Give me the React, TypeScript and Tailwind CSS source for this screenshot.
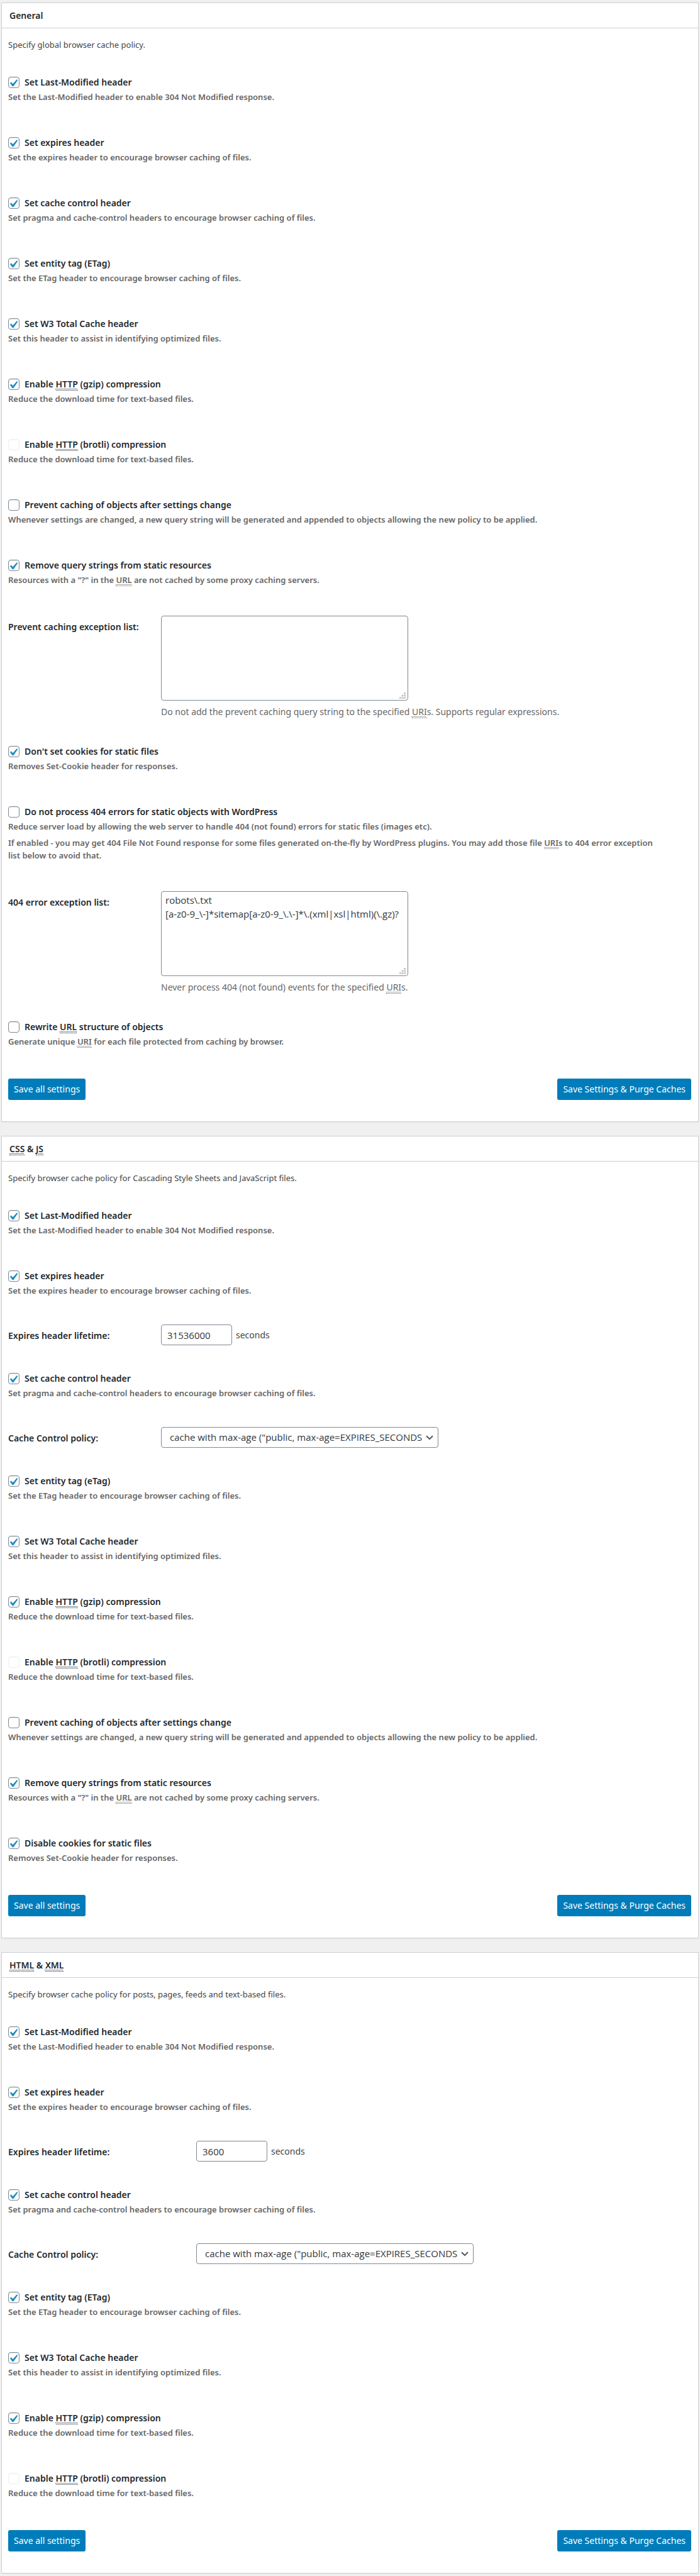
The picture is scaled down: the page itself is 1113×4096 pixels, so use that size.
import { useId, type ReactNode } from "react";

function Abbr({ children }: { children: string }) {
  return (
    <abbr className="border-b border-dotted border-current underline decoration-dotted decoration-1 underline-offset-2">
      {children}
    </abbr>
  );
}

type CheckProps = {
  label: ReactNode;
  note: ReactNode;
  more?: ReactNode;
  checked?: boolean;
  disabled?: boolean;
};

function CheckRow({ label, note, more, checked = false, disabled = false }: CheckProps) {
  const id = useId();
  return (
    <div className="pt-5 pb-[33px] font-semibold">
      <div className="flex h-5 items-center gap-2">
        <span className="relative block size-[18px] shrink-0">
          <input
            id={id}
            type="checkbox"
            defaultChecked={checked}
            disabled={disabled}
            className="peer block size-[18px] appearance-none rounded-[4px] border border-[#7e8993] bg-white shadow-[inset_0_1px_2px_rgba(0,0,0,0.1)] disabled:border-[#efefef] disabled:shadow-[inset_0_1px_2px_rgba(0,0,0,0.04)]"
          />
          <svg
            viewBox="3.4 1.4 15 15"
            className="pointer-events-none absolute inset-0 hidden size-[18px] peer-checked:block"
            aria-hidden="true"
          >
            <path
              d="M14.83 4.89l1.34.94-5.81 8.38H9.02L5.78 9.67l1.34-1.25 2.57 2.4z"
              fill="#1e8cbe"
            />
          </svg>
        </span>
        <label htmlFor={id} className="text-sm text-[#23282d]">
          {label}
        </label>
      </div>
      <p className="mt-[3px] text-[13px] leading-5 text-[#666]">{note}</p>
      {more && <p className="mt-1.5 text-[13px] leading-5 text-[#666]">{more}</p>}
    </div>
  );
}

function FieldLabel({ id, wide, children }: { id: string; wide?: boolean; children: string }) {
  return (
    <label
      htmlFor={id}
      className={
        (wide ? "w-[299px]" : "w-[243px]") +
        " mt-2 shrink-0 text-sm leading-5 font-semibold text-[#23282d]"
      }
    >
      {children}
    </label>
  );
}

function TextareaRow({ label, value, help }: { label: string; value: string; help: ReactNode }) {
  const id = useId();
  return (
    <div className="flex items-start pt-[14px] pb-[23px]">
      <FieldLabel id={id}>{label}</FieldLabel>
      <div>
        <div className="relative h-[135px] w-[393px]">
          <textarea
            id={id}
            defaultValue={value}
            className="block size-full resize-none rounded-[4px] border border-[#7e8993] bg-white px-1.5 py-0.5 font-['Open_Sans',sans-serif] text-[15px] leading-[22px] text-[#32373c]"
          />
          <svg
            viewBox="0 0 11 11"
            className="pointer-events-none absolute right-1 bottom-[3px] size-[10px]"
            fill="#c4c4c4"
            aria-hidden="true"
          >
            <rect x="8" y="0" width="3" height="3" />
            <rect x="4" y="4" width="3" height="3" />
            <rect x="8" y="4" width="3" height="3" />
            <rect x="0" y="8" width="3" height="3" />
            <rect x="4" y="8" width="3" height="3" />
            <rect x="8" y="8" width="3" height="3" />
          </svg>
        </div>
        <p className="mt-2 text-sm leading-5 text-[#666]">{help}</p>
      </div>
    </div>
  );
}

function LifetimeRow({ value, wide }: { value: string; wide?: boolean }) {
  const id = useId();
  return (
    <div className="flex items-start pt-[11px] pb-[23px]">
      <FieldLabel id={id} wide={wide}>
        Expires header lifetime:
      </FieldLabel>
      <div className="flex items-center gap-1.5">
        <input
          id={id}
          type="text"
          defaultValue={value}
          className="h-[33px] w-[113px] rounded-[4px] border border-[#7e8993] bg-white px-[9px] font-['Open_Sans',sans-serif] text-[15px] text-[#32373c]"
        />
        <span className="text-sm text-[#444]">seconds</span>
      </div>
    </div>
  );
}

function PolicyRow({ wide }: { wide?: boolean }) {
  const id = useId();
  return (
    <div className="flex items-start pt-[11px] pb-[23px]">
      <FieldLabel id={id} wide={wide}>
        Cache Control policy:
      </FieldLabel>
      <div className="relative">
        <select
          id={id}
          className="block h-[33px] w-[441px] appearance-none rounded-[4px] border border-[#7e8993] bg-white pr-5 pl-[13px] font-['Open_Sans',sans-serif] text-[15px] text-[#32373c]"
        >
          <option>cache with max-age ("public, max-age=EXPIRES_SECONDS</option>
        </select>
        <svg
          viewBox="0 0 12 8"
          className="pointer-events-none absolute top-[13px] right-2 h-2 w-3"
          fill="none"
          stroke="#555"
          strokeWidth="2"
          aria-hidden="true"
        >
          <path d="M1 1.2l5 5 5-5" />
        </svg>
      </div>
    </div>
  );
}

function Card({ title, intro, children }: { title: ReactNode; intro: string; children: ReactNode }) {
  const button =
    "h-[34px] rounded-[3px] bg-[#007cba] px-[9px] text-sm text-white";
  return (
    <section className="border border-[#ccd0d4] bg-white shadow-[0_1px_1px_rgba(0,0,0,0.04)]">
      <h2 className="flex h-10 items-center border-b border-[#ccd0d4] px-3 text-sm font-semibold text-[#23282d]">
        <span>{title}</span>
      </h2>
      <form className="pt-4 pr-[11px] pb-[34px] pl-[10px]" onSubmit={(e) => e.preventDefault()}>
        <p className="mb-5 text-[13px] leading-5 text-[#444]">{intro}</p>
        {children}
        <div className="flex justify-between pt-4">
          <button type="submit" className={button}>
            Save all settings
          </button>
          <button type="submit" className={button}>
            Save Settings &amp; Purge Caches
          </button>
        </div>
      </form>
    </section>
  );
}

const encourage = "header to encourage browser caching of files.";

function LastModified() {
  return (
    <CheckRow
      checked
      label="Set Last-Modified header"
      note="Set the Last-Modified header to enable 304 Not Modified response."
    />
  );
}

function Expires() {
  return <CheckRow checked label="Set expires header" note={`Set the expires ${encourage}`} />;
}

function CacheControl() {
  return (
    <CheckRow
      checked
      label="Set cache control header"
      note="Set pragma and cache-control headers to encourage browser caching of files."
    />
  );
}

function EntityTag({ name }: { name: string }) {
  return <CheckRow checked label={`Set entity tag (${name})`} note={`Set the ETag ${encourage}`} />;
}

function W3Header() {
  return (
    <CheckRow
      checked
      label="Set W3 Total Cache header"
      note="Set this header to assist in identifying optimized files."
    />
  );
}

function Compression() {
  const note = "Reduce the download time for text-based files.";
  return (
    <>
      <CheckRow
        checked
        label={
          <>
            Enable <Abbr>HTTP</Abbr> (gzip) compression
          </>
        }
        note={note}
      />
      <CheckRow
        disabled
        label={
          <>
            Enable <Abbr>HTTP</Abbr> (brotli) compression
          </>
        }
        note={note}
      />
    </>
  );
}

function QueryStrings() {
  return (
    <>
      <CheckRow
        label="Prevent caching of objects after settings change"
        note="Whenever settings are changed, a new query string will be generated and appended to objects allowing the new policy to be applied."
      />
      <CheckRow
        checked
        label="Remove query strings from static resources"
        note={
          <>
            Resources with a "?" in the <Abbr>URL</Abbr> are not cached by some proxy caching
            servers.
          </>
        }
      />
    </>
  );
}

export default function App() {
  return (
    <main className="flex flex-col gap-[22px] bg-[#f0f0f0] px-0.5 pt-1 pb-[5px] font-['Noto_Sans','Open_Sans',sans-serif]">
      <Card title="General" intro="Specify global browser cache policy.">
        <LastModified />
        <Expires />
        <CacheControl />
        <EntityTag name="ETag" />
        <W3Header />
        <Compression />
        <QueryStrings />
        <TextareaRow
          label="Prevent caching exception list:"
          value=""
          help={
            <>
              Do not add the prevent caching query string to the specified <Abbr>URI</Abbr>s.
              Supports regular expressions.
            </>
          }
        />
        <CheckRow
          checked
          label="Don't set cookies for static files"
          note="Removes Set-Cookie header for responses."
        />
        <CheckRow
          label="Do not process 404 errors for static objects with WordPress"
          note="Reduce server load by allowing the web server to handle 404 (not found) errors for static files (images etc)."
          more={
            <>
              If enabled - you may get 404 File Not Found response for some files generated
              on-the-fly by WordPress plugins. You may add those file <Abbr>URI</Abbr>s to 404 error
              exception <br />
              list below to avoid that.
            </>
          }
        />
        <TextareaRow
          label="404 error exception list:"
          value={"robots\\.txt\n[a-z0-9_\\-]*sitemap[a-z0-9_\\.\\-]*\\.(xml|xsl|html)(\\.gz)?"}
          help={
            <>
              Never process 404 (not found) events for the specified <Abbr>URI</Abbr>s.
            </>
          }
        />
        <CheckRow
          label={
            <>
              Rewrite <Abbr>URL</Abbr> structure of objects
            </>
          }
          note={
            <>
              Generate unique <Abbr>URI</Abbr> for each file protected from caching by browser.
            </>
          }
        />
      </Card>

      <Card
        title={
          <>
            <Abbr>CSS</Abbr> &amp; <Abbr>JS</Abbr>
          </>
        }
        intro="Specify browser cache policy for Cascading Style Sheets and JavaScript files."
      >
        <LastModified />
        <Expires />
        <LifetimeRow value="31536000" />
        <CacheControl />
        <PolicyRow />
        <EntityTag name="eTag" />
        <W3Header />
        <Compression />
        <QueryStrings />
        <CheckRow
          checked
          label="Disable cookies for static files"
          note="Removes Set-Cookie header for responses."
        />
      </Card>

      <Card
        title={
          <>
            <Abbr>HTML</Abbr> &amp; <Abbr>XML</Abbr>
          </>
        }
        intro="Specify browser cache policy for posts, pages, feeds and text-based files."
      >
        <LastModified />
        <Expires />
        <LifetimeRow value="3600" wide />
        <CacheControl />
        <PolicyRow wide />
        <EntityTag name="ETag" />
        <W3Header />
        <Compression />
      </Card>
    </main>
  );
}
